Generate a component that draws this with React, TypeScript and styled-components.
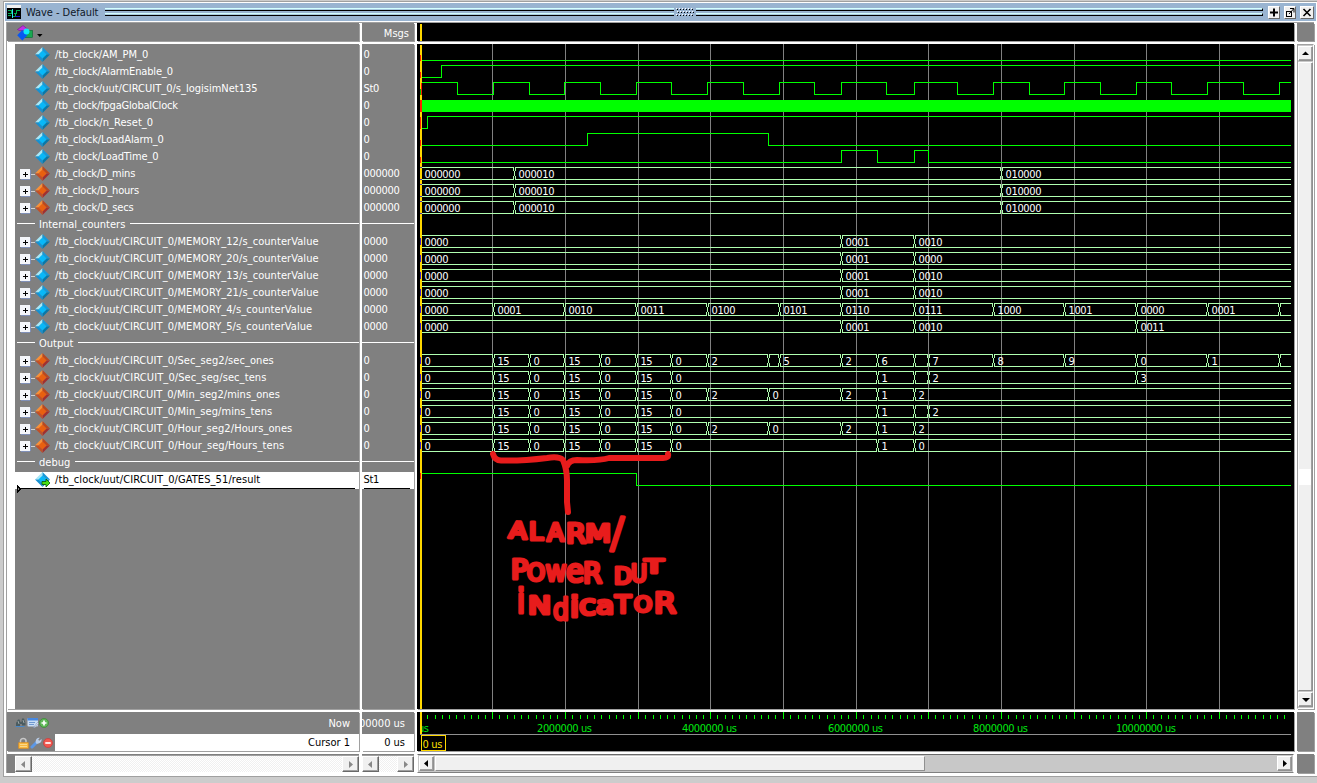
import React from "react";
import styled, { createGlobalStyle, css } from "styled-components";

const FONT = '"DejaVu Sans Condensed", "DejaVu Sans", Tahoma, sans-serif';
const GRAY = "#808080";
const EDGE = "#a0a0a0";

const GlobalStyle = createGlobalStyle`
  * { box-sizing: border-box; }
  html, body { margin: 0; padding: 0; }
  body { background: #cccccc; font-family: ${FONT}; font-size: 11px; font-stretch: condensed; overflow: hidden; }
  svg { display: block; }
`;

/* ---------- data ---------- */

type Segment = [number, string];
type Kind = "signal" | "register" | "divider" | "selected";
interface Row {
  name: string;
  kind: Kind;
  value?: string;
  edges?: number[];
  start?: 0 | 1;
  bus?: Segment[];
  solid?: boolean;
  tracking?: number;
}

const END = 1291;
const blink: Segment[] = [[421, "0"], [493, "15"], [529, "0"], [564, "15"], [600, "0"], [636, "15"], [671, "0"]];
const settings: Segment[] = [[421, "000000"], [514, "000010"], [1001, "010000"]];
const ones: Segment[] = [...blink, [707, "2"], [768, "0"], [841, "2"], [877, "1"], [914, "2"]];
const counter = (a: string, b: string): Segment[] => [[421, "0000"], [841, a], [914, b]];

const rows: Row[] = [
  { name: "/tb_clock/AM_PM_0", kind: "signal", value: "0", start: 0, edges: [], tracking: 0 },
  { name: "/tb_clock/AlarmEnable_0", kind: "signal", value: "0", start: 0, edges: [441], tracking: -0.15 },
  {
    name: "/tb_clock/uut/CIRCUIT_0/s_logisimNet135", kind: "signal", value: "St0", start: 1, tracking: 0,
    edges: [457, 493, 529, 564, 600, 636, 671, 707, 743, 779, 814, 841, 886, 914, 957, 993, 1029, 1064, 1100, 1136, 1171, 1207, 1243, 1279],
  },
  { name: "/tb_clock/fpgaGlobalClock", kind: "signal", value: "0", solid: true, tracking: -0.2 },
  { name: "/tb_clock/n_Reset_0", kind: "signal", value: "0", start: 0, edges: [427] },
  { name: "/tb_clock/LoadAlarm_0", kind: "signal", value: "0", start: 0, edges: [587, 768], tracking: -0.12 },
  { name: "/tb_clock/LoadTime_0", kind: "signal", value: "0", start: 0, edges: [841, 877, 914, 928], tracking: -0.15 },
  { name: "/tb_clock/D_mins", kind: "register", value: "000000", bus: settings, tracking: -0.22 },
  { name: "/tb_clock/D_hours", kind: "register", value: "000000", bus: settings, tracking: -0.22 },
  { name: "/tb_clock/D_secs", kind: "register", value: "000000", bus: settings, tracking: -0.2 },
  { name: "Internal_counters", kind: "divider" },
  { name: "/tb_clock/uut/CIRCUIT_0/MEMORY_12/s_counterValue", kind: "signal", value: "0000", bus: counter("0001", "0010"), tracking: 0.07 },
  { name: "/tb_clock/uut/CIRCUIT_0/MEMORY_20/s_counterValue", kind: "signal", value: "0000", bus: counter("0001", "0000"), tracking: 0.07 },
  { name: "/tb_clock/uut/CIRCUIT_0/MEMORY_13/s_counterValue", kind: "signal", value: "0000", bus: counter("0001", "0010"), tracking: 0.07 },
  { name: "/tb_clock/uut/CIRCUIT_0/MEMORY_21/s_counterValue", kind: "signal", value: "0000", bus: counter("0001", "0010"), tracking: 0.07 },
  {
    name: "/tb_clock/uut/CIRCUIT_0/MEMORY_4/s_counterValue", kind: "signal", value: "0000", tracking: 0.07,
    bus: [[421, "0000"], [493, "0001"], [564, "0010"], [636, "0011"], [707, "0100"], [779, "0101"], [841, "0110"], [914, "0111"], [993, "1000"], [1064, "1001"], [1136, "0000"], [1207, "0001"], [1279, ""]],
  },
  { name: "/tb_clock/uut/CIRCUIT_0/MEMORY_5/s_counterValue", kind: "signal", value: "0000", bus: [...counter("0001", "0010"), [1136, "0011"]], tracking: 0.07 },
  { name: "Output", kind: "divider" },
  {
    name: "/tb_clock/uut/CIRCUIT_0/Sec_seg2/sec_ones", kind: "register", value: "0", tracking: 0.07,
    bus: [...blink, [707, "2"], [768, ""], [779, "5"], [841, "2"], [877, "6"], [914, ""], [928, "7"], [993, "8"], [1064, "9"], [1136, "0"], [1207, "1"], [1279, ""]],
  },
  { name: "/tb_clock/uut/CIRCUIT_0/Sec_seg/sec_tens", kind: "register", value: "0", bus: [...blink, [877, "1"], [914, ""], [928, "2"], [1136, "3"]], tracking: 0.1 },
  { name: "/tb_clock/uut/CIRCUIT_0/Min_seg2/mins_ones", kind: "register", value: "0", bus: ones, tracking: 0.05 },
  { name: "/tb_clock/uut/CIRCUIT_0/Min_seg/mins_tens", kind: "register", value: "0", bus: [...blink, [877, "1"], [914, ""], [928, "2"]], tracking: 0.07 },
  { name: "/tb_clock/uut/CIRCUIT_0/Hour_seg2/Hours_ones", kind: "register", value: "0", bus: ones, tracking: 0.07 },
  { name: "/tb_clock/uut/CIRCUIT_0/Hour_seg/Hours_tens", kind: "register", value: "0", bus: [...blink, [877, "1"], [914, "0"]], tracking: 0.08 },
  { name: "debug", kind: "divider" },
  { name: "/tb_clock/uut/CIRCUIT_0/GATES_51/result", kind: "selected", value: "St1", start: 1, edges: [636], tracking: 0.09 },
];

const gridLines = [492, 565, 638, 710, 783, 856, 928, 1001, 1074, 1146, 1219];
const minorSteps = [7, 15, 22, 29, 36, 44, 51, 58, 65];
const timeLabels: [number, number, string][] = [
  [537, 55, "2000000 us"], [682, 55, "4000000 us"], [828, 55, "6000000 us"], [973, 55, "8000000 us"], [1116, 60, "10000000 us"],
];

/* ---------- window chrome ---------- */

const Window = styled.div`
  width: 1317px;
  height: 783px;
  padding: 1px 0 6px 3px;
  background: #cccccc;
`;

const Frame = styled.div`
  width: 1314px;
  height: 776px;
  background: #ffffff;
  border: 1px solid ${EDGE};
  border-right: 0;
  padding: 1px 1px 2px 1px;
`;

const TitleBar = styled.div`
  height: 18px;
  width: 1311px;
  background: #99b4d1;
  display: flex;
  align-items: center;
  padding: 0 2px 0 2px;
`;

const Title = styled.span`
  width: 80px;
  padding-left: 1px;
  margin-left: 4px;
  color: #101828;
  white-space: pre;
  letter-spacing: -0.05px;
`;

const GrooveRun = styled.div<{ $w?: number }>`
  ${(p) => (p.$w ? `width: ${p.$w}px;` : "flex: 1;")}
  display: flex;
  flex-direction: column;
  gap: 2px;
  padding-top: 5px;
  height: 18px;
`;

const Groove = styled.div<{ $end?: boolean }>`
  height: 3px;
  background: #a9cbe0;
  border-top: 1px solid #d4ffff;
  border-bottom: 1px solid #000000;
  ${(p) => p.$end && "border-right: 1px solid #000000;"}
`;

const TitleButtons = styled.div`
  display: flex;
  gap: 4px;
  margin-left: 5px;
  width: 46px;
`;

const TitleButton = styled.button<{ $w?: number }>`
  width: ${(p) => p.$w ?? 12}px;
  height: 13px;
  padding: 0;
  flex: none;
  border: 1px solid;
  border-color: #ffffff #696969 #696969 #ffffff;
  background: #f0f0f0;
  display: flex;
  justify-content: center;
`;

const Body = styled.div`
  display: grid;
  grid-template-columns: 352px 52px 877px 17px;
  grid-template-rows: 18px 665px 39px 19px;
  gap: 3px;
  width: 1308px;
  height: 751px;
  margin: 1px 0 0 1px;
  border-left: 1px solid ${EDGE};
  border-top: 1px solid ${EDGE};
`;

const Cell = styled.div<{ $bg?: string }>`
  background: ${(p) => p.$bg ?? GRAY};
  box-shadow: 1px 1px 0 ${EDGE};
  overflow: hidden;
  color: #ffffff;
  min-width: 0;
`;

const HeaderNames = styled(Cell)`
  display: flex;
  align-items: flex-start;
  padding: 2px 0 0 10px;
`;

const HeaderValues = styled(Cell)`
  text-align: right;
  padding: 3px 5px 0 0;
  line-height: 15px;
`;

/* ---------- signal lists ---------- */

const NameList = styled(Cell)`
  border-left: 8px solid #ffffff;
  padding-top: 3px;
`;

const ValueList = styled(Cell)`
  padding-top: 3px;
`;

const selected = css`
  background: #ffffff;
  color: #000000;
`;

const NameRow = styled.div<{ $on: boolean }>`
  height: 17px;
  display: flex;
  align-items: flex-start;
  white-space: pre;
  line-height: 16px;
  ${(p) => p.$on && selected}
`;

const IconSlot = styled.div`
  width: 15px;
  margin-left: 5px;
  flex: none;
`;

const RowText = styled.span<{ $tracking: number }>`
  margin-left: 5px;
  letter-spacing: ${(p) => p.$tracking}px;
`;

const ValueRow = styled.div<{ $on: boolean }>`
  height: 17px;
  line-height: 16px;
  padding-left: 1.5px;
  letter-spacing: -0.27px;
  ${(p) => p.$on && selected}
`;

const DividerRow = styled.div`
  height: 17px;
  display: flex;
  align-items: flex-start;
  padding-left: 2px;
  line-height: 16px;
`;

const DividerValue = styled.div`
  height: 17px;
  display: flex;
`;

const Rule = styled.div<{ $w?: number }>`
  height: 1px;
  background: #ffffff;
  margin-top: 6px;
  ${(p) => (p.$w ? `width: ${p.$w}px;` : "flex: 1;")}
`;

const DividerText = styled.span`
  margin: 0 5px 0 4px;
`;

const InsertLine = styled.div`
  position: relative;
  height: 0;
  svg { position: absolute; left: 0; top: -4px; }
`;

/* ---------- footer ---------- */

const FooterRow = styled.div<{ $h: number; $light?: boolean }>`
  height: ${(p) => p.$h}px;
  display: flex;
  align-items: center;
  justify-content: space-between;
  ${(p) => p.$light && selected}
`;

const IconGroup = styled.div<{ $l: number; $gap?: number }>`
  background: ${GRAY};
  width: 48px;
  height: 100%;
  display: flex;
  align-items: center;
  gap: ${(p) => p.$gap ?? 0}px;
  padding-left: ${(p) => p.$l}px;
  svg { flex: none; }
`;

const FooterText = styled.span`
  padding-right: 9px;
  white-space: nowrap;
`;

const FooterValue = styled.div<{ $h: number; $light?: boolean }>`
  height: ${(p) => p.$h}px;
  display: flex;
  align-items: center;
  justify-content: flex-end;
  padding-right: 9px;
  white-space: nowrap;
  ${(p) => p.$light && selected}
`;

/* ---------- scroll bars ---------- */

const ScrollCell = styled(Cell)`
  display: flex;
  box-shadow: none;
`;

const Gutter = styled.div`
  width: 8px;
`;

const FadedBar = styled.div`
  flex: 1;
  display: flex;
  justify-content: space-between;
  height: 18px;
  margin-top: 1px;
  background: repeating-conic-gradient(#ffffff 0 25%, #f0f0f0 0 50%) 0 0 / 2px 2px;
  border-top: 1px solid ${EDGE};
  border-bottom: 1px solid #ffffff;
`;

const FadedButton = styled.button`
  width: 17px;
  height: 16px;
  padding: 0;
  border: 1px solid;
  border-color: #ffffff #696969 #696969 #ffffff;
  box-shadow: inset -1px -1px 0 #a0a0a0;
  background: #f0f0f0;
  display: flex;
  align-items: center;
  justify-content: center;
`;

const WaveBar = styled.div`
  flex: 1;
  display: flex;
  height: 19px;
  background: #c8c8c8;
  border: 1px solid;
  border-color: #696969 #ffffff #808080 #ffffff;
  padding: 1px;
`;

const BarButton = styled.button`
  width: 15px;
  height: 15px;
  padding: 0;
  flex: none;
  border: 1px solid;
  border-color: #ffffff #909090 #909090 #ffffff;
  box-shadow: inset -1px -1px 0 #a0a0a0;
  background: #f0f0f0;
  display: flex;
  align-items: center;
  justify-content: center;
`;

const HThumb = styled.div`
  width: 490px;
  height: 15px;
  margin-left: 1px;
  background: #f0f0f0;
  border: 1px solid;
  border-color: #ffffff #909090 #909090 #ffffff;
`;

const Spacer = styled.div`
  flex: 1;
`;

const VerticalBar = styled(Cell)`
  display: flex;
  flex-direction: column;
  background: #c8c8c8;
  border: 1px solid;
  border-color: ${EDGE} #ffffff #ffffff ${EDGE};
  padding: 1px 0 1px 0;
`;

const VThumb = styled.div`
  flex: 1;
  width: 15px;
  margin: 1px 0;
  background: #f0f0f0;
  border: 1px solid;
  border-color: #ffffff #909090 #909090 #ffffff;
  box-shadow: inset -1px 0 0 #a0a0a0;
  padding-top: 406px;
`;

const ThumbMark = styled.div`
  width: 12px;
  height: 16px;
  background: #ffffff;
`;

/* ---------- icons ---------- */

const Arrow = ({ dir, color = "#000" }: { dir: "l" | "r" | "u" | "d"; color?: string }) => {
  const d = { l: "M6 1v7L2 4.5z", r: "M3 1v7l4-3.5z", u: "M1 6h7L4.5 2.5z", d: "M1 3h8L5 7z" }[dir];
  return (
    <svg width="9" height="9" viewBox="0 0 9 9"><path d={d} fill={color} /></svg>
  );
};

const WaveLogo = () => (
  <svg width="14" height="14" viewBox="0 0 14 14" shapeRendering="crispEdges">
    <rect width="14" height="14" fill="#000" />
    <rect x="0" y="0" width="14" height="3" fill="#f0f0f0" />
    <path d="M1 5.5h3v3h-3M7 8.5h2v-3h4" stroke="#00b050" fill="none" />
    <path d="M1 10.5h3M6 11.5h2v-3" stroke="#00b050" fill="none" />
    <path d="M5.5 4v9" stroke="#30e0f0" />
    <path d="M8 11.5h5" stroke="#2020d0" />
  </svg>
);

const ShapesIcon = () => (
  <svg width="26" height="16" viewBox="0 0 26 16">
    <path d="M0.5 4.5L6 0.5l5 4-2 1H2z" fill="#c030e8" stroke="#7a108f" strokeWidth=".6" />
    <rect x="8" y="5.500" width="7.500" height="7" fill="#18a850" stroke="#086830" strokeWidth=".6" />
    <path d="M5.300 5l5.200 5.200-5.200 5.200L.2 10.200z" fill="#0858f0" />
    <circle cx="9.500" cy="6.500" r="3" fill="#10e8f8" />
    <path d="M20 9h5.500l-2.700 3z" fill="#000" />
  </svg>
);

const DiamondIcon = ({ tone, arrow }: { tone: "blue" | "orange"; arrow?: boolean }) => {
  const c = tone === "blue"
    ? ["#a8e8f8", "#1898d8", "#0878a8", "#1890d0", "#08b8f8"]
    : ["#f89038", "#b84820", "#a03030", "#c05028", "#e86010"];
  return (
    <svg width="15" height="16" viewBox="0 0 15 16">
      <path d="M7.500 0L0 7.500h4L7.500 4z" fill={c[0]} />
      <path d="M7.500 0L15 7.500h-4L7.500 4z" fill={c[1]} />
      <path d="M7.500 15L15 7.500h-4L7.500 11z" fill={c[2]} />
      <path d="M7.500 15L0 7.500h4L7.500 11z" fill={c[3]} />
      <path d="M7.500 3.400L11.600 7.500l-4.100 4.100L3.400 7.500z" fill={c[4]} />
      {arrow && <path d="M7 9.500h4V7l4 4-4 4v-2.500H7z" fill="#48e010" stroke="#085808" strokeWidth=".8" />}
    </svg>
  );
};

const ExpandIcon = () => (
  <svg width="15" height="15" viewBox="0 0 15 15" shapeRendering="crispEdges">
    <path d="M10 8.500h5" stroke="#d0d0d0" />
    <rect x="0" y="3" width="10" height="10" fill="#f4f6fa" />
    <path d="M1 13.500h9M10.500 4v9" stroke="#8090b8" />
    <path d="M3 8.500h5M5.500 6v5" stroke="#000" />
  </svg>
);

const BinocularIcon = () => (
  <svg width="12" height="12" viewBox="0 0 12 12">
    <path d="M1 6l2-3.500h1.500L5.500 5h1L7 1.500h2L10.500 6v2.500H7V7H5v2H1z" fill="#4c5c60" />
    <path d="M.5 9.500h9" stroke="#4888c8" strokeWidth="1" />
    <path d="M3 4l1 3M8 3l1 3" stroke="#b0b8b8" strokeWidth=".8" />
  </svg>
);

const NoteIcon = () => (
  <svg width="12" height="12" viewBox="0 0 12 12">
    <rect x=".5" y="1" width="10.500" height="8.500" rx="1" fill="#c8dcf4" />
    <rect x=".5" y="1" width="10.500" height="2.500" fill="#4888e0" />
    <path d="M2 5.500h6M2 7.500h5" stroke="#7098d0" />
    <path d="M10.500 5.500L7 10l-1 1 2-.5 3.500-4z" fill="#e8e8f0" stroke="#6880a8" strokeWidth=".5" />
  </svg>
);

const RoundIcon = ({ plus }: { plus?: boolean }) => (
  <svg width="10" height="10" viewBox="0 0 10 10">
    <circle cx="5" cy="5" r="4.500" fill={plus ? "#60b858" : "#f05850"} stroke={plus ? "#388830" : "#d03838"} strokeWidth=".7" />
    <path d={plus ? "M2.500 5h5M5 2.500v5" : "M2.300 5h5.400"} stroke="#fff" strokeWidth="1.700" />
  </svg>
);

const LockIcon = () => (
  <svg width="11" height="12" viewBox="0 0 11 12">
    <path d="M2.500 6V3.500a2.800 2.500 0 0 1 5.500 0V6" fill="none" stroke="#c8c8c8" strokeWidth="1.500" />
    <rect x=".5" y="5.500" width="10" height="6" rx=".5" fill="#f8b840" stroke="#d88820" strokeWidth=".6" />
    <path d="M2 7.500h7M2 9.500h7" stroke="#fce0a0" strokeWidth=".8" />
  </svg>
);

const WrenchIcon = () => (
  <svg width="12" height="12" viewBox="0 0 12 12">
    <path d="M2 10L7 5" stroke="#5c98e8" strokeWidth="3" strokeLinecap="round" />
    <path d="M6 6.500C4.800 3 7.200 .200 9.800 .800L8.200 2.800l1 1L11.600 2C12.200 5 9.500 7.500 6 6.500z" fill="#b8cce8" />
  </svg>
);

/* ---------- waveform drawing ---------- */

const WaveText = styled.text<{ $c: string }>`
  font-family: ${FONT};
  font-size: 11px;
  font-stretch: condensed;
  fill: ${(p) => p.$c};
`;

const high = (i: number) => 48 + 17 * i;

const BitTrace = ({ row, i }: { row: Row; i: number }) => {
  let level = row.start ?? 0;
  const y = (l: number) => high(i) + (l ? 0.5 : 12.5);
  let d = `M422 ${y(level)}`;
  for (const x of row.edges ?? []) {
    d += `H${x + 0.5}`;
    level = level ? 0 : 1;
    d += `V${y(level)}`;
  }
  return <path d={`${d}H${END}`} stroke="#00ff00" fill="none" />;
};

const BusTrace = ({ row, i }: { row: Row; i: number }) => {
  const t = high(i);
  const b = t + 12;
  return (
    <g>
      {row.bus!.map(([x, label], k) => {
        const from = k === 0 ? 422 : x + 1;
        const to = k + 1 < row.bus!.length ? row.bus![k + 1][0] : END;
        return (
          <g key={x}>
            <path d={`M${from} ${t + 0.5}H${to}M${from} ${b + 0.5}H${to}`} stroke="#b0ffb0" />
            {k > 0 && (
              <path
                d={`M${x - 0.5} ${t}v4M${x + 1.5} ${t}v4M${x + 0.5} ${t + 4}v5M${x - 0.5} ${b - 3}v4M${x + 1.5} ${b - 3}v4`}
                stroke="#b0ffb0"
              />
            )}
            {label && (
              <WaveText $c="#ffffff" x={(k === 0 ? 420 : x) + 4.5} y={t + 11} textLength={label.length * 6}>{label}</WaveText>
            )}
          </g>
        );
      })}
    </g>
  );
};

interface Letter { c: string; x: number; w: number; y: number; h: number; r?: number }
const handwriting: Letter[] = [
  { c: "A", x: 509, w: 18, y: 540, h: 20, r: 4 }, { c: "L", x: 529, w: 14, y: 541, h: 21 }, { c: "A", x: 547, w: 17, y: 542, h: 21 },
  { c: "R", x: 566, w: 20, y: 544, h: 23 }, { c: "M", x: 585, w: 26, y: 543, h: 22 }, { c: "/", x: 611, w: 12, y: 549, h: 34, r: 3 },
  { c: "P", x: 511, w: 17, y: 580, h: 23 }, { c: "O", x: 527, w: 18, y: 582, h: 21 }, { c: "W", x: 546, w: 20, y: 582, h: 19 },
  { c: "e", x: 566, w: 18, y: 583, h: 27 }, { c: "R", x: 583, w: 19, y: 584, h: 24 }, { c: "D", x: 614, w: 18, y: 585, h: 20 },
  { c: "U", x: 631, w: 16, y: 583, h: 21 }, { c: "T", x: 645, w: 18, y: 574, h: 17 },
  { c: "i", x: 517, w: 8, y: 614, h: 28 }, { c: "N", x: 528, w: 23, y: 615, h: 22 }, { c: "d", x: 553, w: 16, y: 621, h: 26 },
  { c: "i", x: 570, w: 9, y: 618, h: 24 }, { c: "c", x: 579, w: 17, y: 616, h: 24 }, { c: "a", x: 596, w: 18, y: 615, h: 22 },
  { c: "T", x: 615, w: 16, y: 614, h: 22 }, { c: "O", x: 634, w: 18, y: 613, h: 19 }, { c: "R", x: 654, w: 22, y: 614, h: 24 },
];

const Ink = styled.text`
  font-family: "DejaVu Sans", sans-serif;
  fill: #e81c1c;
  stroke: #e81c1c;
  stroke-width: 3.2px;
  stroke-linejoin: round;
`;

const Annotation = () => (
  <g>
    <path
      d="M493 454q2 7 9 6.500q20 .5 45-2.500q12-2 16 2q4 10 4 20v22l1 10M567 466q2-6 10-6q22 1 32-2h54q6 0 5-4"
      fill="none" stroke="#e81c1c" strokeWidth="6" strokeLinecap="round" strokeLinejoin="round"
    />
    {handwriting.map((s, k) => (
      <Ink
        key={k}
        fontSize={(s.h - 3.4) / 0.729}
        x={s.x}
        y={s.y - 1.5}
        textLength={s.w}
        lengthAdjust="spacingAndGlyphs"
        transform={s.r ? `rotate(${s.r} ${s.x + 10} ${s.y - 10})` : undefined}
      >
        {s.c}
      </Ink>
    ))}
  </g>
);

const InitialMarks = () => (
  <g>
    {rows.map((row, i) => {
      const y = high(i);
      if (row.kind === "divider") return null;
      if (row.bus) {
        return i < 10
          ? <path key={i} d={`M420 ${y + 0.5}h2M420 ${y + 12.5}h2`} stroke="#5030a0" />
          : <path key={i} d={`M420.5 ${y + 3}v7`} stroke="#4020c0" />;
      }
      if (row.solid) return <rect key={i} x="420" y={y + 1} width="2" height="12" fill="#ff2000" />;
      if (i === 2) return <path key={i} d={`M421.5 ${y + 1}v12`} stroke="#ff2000" />;
      const top = i === 4 ? y + 1 : i === 25 ? y : y + 7;
      return <path key={i} d={`M420.5 ${top}v${i === 4 ? 12 : 6}`} stroke="#ff2000" />;
    })}
    <path d="M420.500 89v6" stroke="#00c000" />
  </g>
);

const WaveCanvas = () => (
  <svg width="877" height="665" viewBox="417 44 877 665">
    <g shapeRendering="crispEdges">
      {gridLines.map((x) => <path key={x} d={`M${x + 0.5} 44v665`} stroke="#808080" />)}
      <rect x="420" y="45" width="2" height="664" fill="#ffd800" />
      {rows.map((row, i) => {
        if (row.kind === "divider") return null;
        if (row.solid) return <rect key={i} x="422" y={high(i) + 1} width={END - 422} height="12" fill="#00ff00" />;
        return row.bus ? <BusTrace key={i} row={row} i={i} /> : <BitTrace key={i} row={row} i={i} />;
      })}
      <InitialMarks />
    </g>
    <Annotation />
  </svg>
);

const Timeline = () => (
  <svg width="877" height="39" viewBox="417 712 877 39">
    <g shapeRendering="crispEdges">
      {[420, ...gridLines].map((g) => (
        <g key={g} stroke="#00ff00">
          {g > 420 && <path d={`M${g + 0.5} 712v7`} />}
          {minorSteps.map((s) => <path key={s} d={`M${g + s + 0.5} 715v4`} />)}
        </g>
      ))}
      <path d="M420 734.500H1291" stroke="#909090" />
    </g>
    <WaveText $c="#00e810" x="418" y="732" textLength="11">us</WaveText>
    <path d="M417 712h3v22h-3z" fill="#000" />
    <path d="M421 712v22" stroke="#ffd800" strokeWidth="2" />
    {timeLabels.map(([x, w, label]) => (
      <WaveText key={x} $c="#00e810" x={x} y="732" textLength={w}>{label}</WaveText>
    ))}
    <rect x="421.500" y="735.500" width="24" height="15" fill="#000" stroke="#ffd800" />
    <WaveText $c="#ffe000" x="422.500" y="748" textLength="20">0 us</WaveText>
  </svg>
);

const HeaderCursor = () => (
  <svg width="877" height="18" viewBox="417 23 877 18">
    <rect x="420" y="24" width="2" height="17" fill="#ffd800" />
  </svg>
);

const Grip = () => (
  <svg width="22" height="9" viewBox="0 0 22 9" shapeRendering="crispEdges">
    {Array.from({ length: 3 }, (_, r) =>
      Array.from({ length: 6 }, (_, c) => (
        <g key={`${r}-${c}`}>
          <rect x={2 + c * 3 + (r % 2)} y={r * 3} width="1" height="1" fill="#fff" />
          <rect x={3 + c * 3 + (r % 2)} y={1 + r * 3} width="1" height="1" fill="#000" />
        </g>
      )),
    )}
  </svg>
);

/* ---------- page ---------- */

export default function App() {
  return (
    <>
      <GlobalStyle />
      <Window>
        <Frame>
          <TitleBar>
            <WaveLogo />
            <Title>Wave - Default</Title>
            <GrooveRun $w={569}><Groove /><Groove /></GrooveRun>
            <Grip />
            <GrooveRun><Groove $end /><Groove $end /></GrooveRun>
            <TitleButtons>
              <TitleButton aria-label="Zoom">
                <svg width="10" height="11" viewBox="0 0 10 11"><path d="M1 5.500h8M5 1.500v8" stroke="#000" strokeWidth="2" /></svg>
              </TitleButton>
              <TitleButton aria-label="Undock">
                <svg width="10" height="11" viewBox="0 0 10 11" fill="none" stroke="#000">
                  <rect x="1.500" y="4.500" width="5" height="5" /><path d="M4 7l4.500-5M5 1.500h4v4" />
                </svg>
              </TitleButton>
              <TitleButton aria-label="Close" $w={14}>
                <svg width="10" height="11" viewBox="0 0 10 11"><path d="M1.500 2l7 7M8.500 2l-7 7" stroke="#000" strokeWidth="1.600" /></svg>
              </TitleButton>
            </TitleButtons>
          </TitleBar>
          <Body>
            <HeaderNames><ShapesIcon /></HeaderNames>
            <HeaderValues>Msgs</HeaderValues>
            <Cell $bg="#000"><HeaderCursor /></Cell>
            <Cell />

            <NameList>
              {rows.map((row) =>
                row.kind === "divider" ? (
                  <DividerRow key={row.name}>
                    <Rule $w={18} />
                    <DividerText>{row.name}</DividerText>
                    <Rule />
                  </DividerRow>
                ) : (
                  <NameRow key={row.name} $on={row.kind === "selected"}>
                    <IconSlot>{row.bus && <ExpandIcon />}</IconSlot>
                    <DiamondIcon tone={row.kind === "register" ? "orange" : "blue"} arrow={row.kind === "selected"} />
                    <RowText $tracking={row.tracking ?? 0.05}>{row.name}</RowText>
                  </NameRow>
                ),
              )}
              <InsertLine>
                <svg width="345" height="8" viewBox="0 0 345 8" shapeRendering="crispEdges">
                  <path d="M6 3.500h334" stroke="#000" />
                  <path d="M2.500 1v6l3-3z" fill="#808080" stroke="#000" />
                </svg>
              </InsertLine>
            </NameList>
            <ValueList>
              {rows.map((row) =>
                row.kind === "divider" ? (
                  <DividerValue key={row.name}><Rule /></DividerValue>
                ) : (
                  <ValueRow key={row.name} $on={row.kind === "selected"}>{row.value}</ValueRow>
                ),
              )}
              <InsertLine>
                <svg width="50" height="8" viewBox="0 0 50 8" shapeRendering="crispEdges">
                  <path d="M2 3.500h46" stroke="#000" />
                </svg>
              </InsertLine>
            </ValueList>
            <Cell $bg="#000"><WaveCanvas /></Cell>
            <VerticalBar>
              <BarButton aria-label="Scroll up"><Arrow dir="u" /></BarButton>
              <VThumb><ThumbMark /></VThumb>
              <BarButton aria-label="Scroll down"><Arrow dir="d" /></BarButton>
            </VerticalBar>

            <Cell>
              <FooterRow $h={22}>
                <IconGroup $l={8}><BinocularIcon /><NoteIcon /><RoundIcon plus /></IconGroup>
                <FooterText>Now</FooterText>
              </FooterRow>
              <FooterRow $h={17} $light>
                <IconGroup $l={11} $gap={1}><LockIcon /><WrenchIcon /><RoundIcon /></IconGroup>
                <FooterText>Cursor 1</FooterText>
              </FooterRow>
            </Cell>
            <Cell>
              <FooterValue $h={22}>00000 us</FooterValue>
              <FooterValue $h={17} $light>0 us</FooterValue>
            </Cell>
            <Cell $bg="#000"><Timeline /></Cell>
            <Cell />

            <ScrollCell>
              <Gutter />
              <FadedBar>
                <FadedButton aria-label="Left"><Arrow dir="l" color="#888" /></FadedButton>
                <FadedButton aria-label="Right"><Arrow dir="r" color="#888" /></FadedButton>
              </FadedBar>
            </ScrollCell>
            <ScrollCell>
              <FadedBar>
                <FadedButton aria-label="Left"><Arrow dir="l" color="#888" /></FadedButton>
                <FadedButton aria-label="Right"><Arrow dir="r" color="#888" /></FadedButton>
              </FadedBar>
            </ScrollCell>
            <ScrollCell>
              <WaveBar>
                <BarButton aria-label="Left"><Arrow dir="l" /></BarButton>
                <HThumb />
                <Spacer />
                <BarButton aria-label="Right"><Arrow dir="r" /></BarButton>
              </WaveBar>
            </ScrollCell>
            <Cell />
          </Body>
        </Frame>
      </Window>
    </>
  );
}
